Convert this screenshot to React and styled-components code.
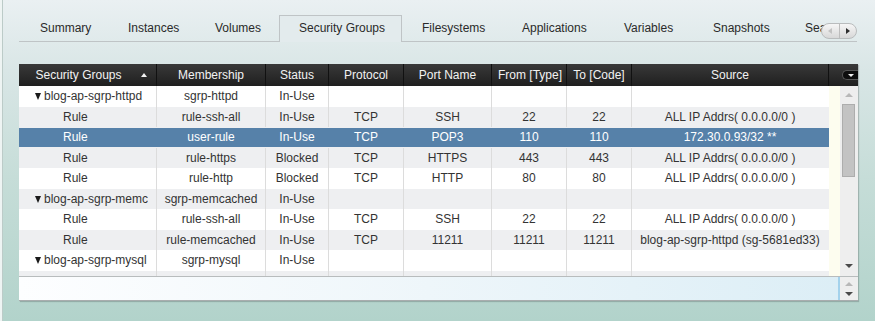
import React from 'react';
import styled, { createGlobalStyle, css } from 'styled-components';

const Global = createGlobalStyle`
  html, body { margin: 0; padding: 0; }
  body {
    width: 875px;
    height: 321px;
    overflow: hidden;
    font-family: "Liberation Sans", Arial, sans-serif;
  }
`;

const Page = styled.div`
  box-sizing: border-box;
  width: 875px;
  height: 321px;
  padding: 15px 17px 0 19px;
  display: flex;
  flex-direction: column;
  background: linear-gradient(to bottom, #eaf0f2 0%, #d9e6e6 22%, #c6ddd8 55%, #b2d3cb 100%);
  box-shadow: inset 2px 0 0 #eef4f3, inset 3px 0 0 #bccbc8;
`;

/* ---------- Tabs ---------- */
const TabStrip = styled.div`
  position: relative;
  height: 26px;
  margin-right: 1px;
  padding-left: 1px;
  display: flex;
  align-items: flex-start;
  border-bottom: 1px solid #bfc4c6;
`;

const TabList = styled.div`
  display: flex;
  height: 27px;
  flex: 1;
  overflow: hidden;
`;

const Tab = styled.div`
  flex: none;
  box-sizing: border-box;
  width: ${(p) => p.$w}px;
  height: 27px;
  padding: 0 0 0 19px;
  border: 1px solid transparent;
  border-bottom: none;
  font-size: 12px;
  line-height: 25px;
  color: #2a2a2a;
  white-space: nowrap;
  ${(p) =>
    p.$active &&
    css`
      border-color: #bfc4c6;
      background: #e3ebed;
    `}
`;

const Scroller = styled.div`
  position: absolute;
  right: 0;
  top: 8px;
  box-sizing: border-box;
  width: 36px;
  height: 16px;
  display: flex;
  border: 1px solid #b9bcbd;
  border-radius: 8px;
  background: linear-gradient(to bottom, #f6f6f6, #d8d8d8);
  overflow: hidden;
`;

const ScrollHalf = styled.div`
  flex: 1;
  display: flex;
  align-items: center;
  justify-content: center;
  & + & {
    border-left: 1px solid #bdbdbd;
  }
`;

const SideArrow = styled.span`
  width: 0;
  height: 0;
  border-top: 3.5px solid transparent;
  border-bottom: 3.5px solid transparent;
  ${(p) =>
    p.$dir === 'left'
      ? css`border-right: 4px solid ${p.$color};`
      : css`border-left: 4px solid ${p.$color};`}
`;

/* ---------- Grid ---------- */
const Grid = styled.div`
  margin-top: 22px;
  width: 839px;
  display: flex;
  flex-direction: column;
  box-shadow: 1px 1px 1px rgba(0, 0, 0, 0.18);
`;

const HeaderRow = styled.div`
  display: flex;
  height: 22px;
  background: linear-gradient(to bottom, #393939, #1f1f1f);
`;

const HeadCell = styled.div`
  position: relative;
  box-sizing: border-box;
  flex: none;
  width: ${(p) => p.$w}px;
  padding: ${(p) => (p.$sort ? '0 18px 0 0' : '0 6px')};
  border-right: 1px solid #111;
  color: #f2f2f2;
  font-size: 12px;
  line-height: 22px;
  text-align: center;
  white-space: nowrap;
  overflow: hidden;
`;

const SortMark = styled.span`
  position: absolute;
  right: 9px;
  top: 9px;
  width: 0;
  height: 0;
  border-left: 3px solid transparent;
  border-right: 3px solid transparent;
  border-bottom: 4px solid #f2f2f2;
`;

const MenuCell = styled.div`
  flex: 1;
  display: flex;
  align-items: center;
  justify-content: flex-end;
`;

const MenuPill = styled.div`
  box-sizing: border-box;
  width: 16px;
  height: 10px;
  border: 1px solid #555;
  border-right: none;
  border-radius: 5px 0 0 5px;
  background: #0d0d0d;
  display: flex;
  align-items: center;
  justify-content: center;
`;

const DownMark = styled.span`
  width: 0;
  height: 0;
  border-left: ${(p) => p.$half}px solid transparent;
  border-right: ${(p) => p.$half}px solid transparent;
  border-top: ${(p) => p.$h}px solid ${(p) => p.$color};
`;

const UpMark = styled.span`
  width: 0;
  height: 0;
  border-left: ${(p) => p.$half}px solid transparent;
  border-right: ${(p) => p.$half}px solid transparent;
  border-bottom: ${(p) => p.$h}px solid ${(p) => p.$color};
`;

const Body = styled.div`
  display: flex;
  height: 190px;
  background: #fff;
  border-bottom: 1px solid #b8bcbd;
`;

const Rows = styled.div`
  width: 810px;
  flex: none;
  overflow: hidden;
`;

const Row = styled.div`
  display: flex;
  height: 20.5px;
  background: ${(p) => (p.$sel ? '#5681a9' : p.$alt ? '#eeeff1' : '#ffffff')};
  color: ${(p) => (p.$sel ? '#ffffff' : '#333333')};
  ${(p) =>
    p.$sel &&
    css`
      box-shadow: inset 0 1px 0 #eeeff1, inset 0 -1px 0 #eeeff1;
    `}
`;

const Cell = styled.div`
  box-sizing: border-box;
  flex: none;
  width: ${(p) => p.$w}px;
  padding: 0 4px;
  border-right: 1px solid ${(p) => (p.$last ? 'transparent' : p.$sel ? 'transparent' : '#dcdcdc')};
  font-size: 12px;
  line-height: 20.5px;
  text-align: center;
  white-space: nowrap;
  overflow: hidden;
`;

const NameCell = styled(Cell)`
  display: flex;
  align-items: center;
  text-align: left;
  padding: 0 8px 0 ${(p) => (p.$group ? 16 : 44)}px;
`;

const NameText = styled.span`
  flex: 1;
  min-width: 0;
  overflow: hidden;
  white-space: nowrap;
  text-overflow: clip;
`;

const Twisty = styled.span`
  flex: none;
  width: 0;
  height: 0;
  margin: 1px 3px 0 0;
  border-left: 3.5px solid transparent;
  border-right: 3.5px solid transparent;
  border-top: 7px solid #1a1a1a;
`;

const Gutter = styled.div`
  width: 11px;
  flex: none;
  background: #fdfdef;
`;

const VScroll = styled.div`
  flex: 1;
  display: flex;
  flex-direction: column;
  align-items: center;
  background: #eeeeee;
  padding: 7px 0 8px;
`;

const Thumb = styled.div`
  box-sizing: border-box;
  align-self: flex-start;
  margin: 7px 0 0 2px;
  width: 13px;
  height: 73px;
  background: #c3c3c3;
  border: 1px solid #adadad;
`;

const Spacer = styled.div`
  flex: 1;
`;

const Footer = styled.div`
  display: flex;
  height: 23px;
  border-bottom: 1px solid #a9adae;
`;

const Entry = styled.div`
  width: 819px;
  flex: none;
  background: linear-gradient(to right, #fdfeff 0%, #eef6fa 50%, #dceef6 100%);
  border-right: 2px solid #a3d2ec;
`;

const Spin = styled.div`
  flex: 1;
  display: flex;
  flex-direction: column;
  align-items: center;
  justify-content: center;
  gap: 6px;
  background: #eeeeee;
`;

const cols = [138, 109, 63, 75, 88, 75, 65, 197];
const heads = ['Security Groups', 'Membership', 'Status', 'Protocol', 'Port Name', 'From [Type]', 'To [Code]', 'Source'];
const ALL = 'ALL IP Addrs( 0.0.0.0/0 )';

const data = [
  { g: true, c: ['blog-ap-sgrp-httpd', 'sgrp-httpd', 'In-Use', '', '', '', '', ''] },
  { c: ['Rule', 'rule-ssh-all', 'In-Use', 'TCP', 'SSH', '22', '22', ALL] },
  { sel: true, c: ['Rule', 'user-rule', 'In-Use', 'TCP', 'POP3', '110', '110', '172.30.0.93/32 **'] },
  { c: ['Rule', 'rule-https', 'Blocked', 'TCP', 'HTTPS', '443', '443', ALL] },
  { c: ['Rule', 'rule-http', 'Blocked', 'TCP', 'HTTP', '80', '80', ALL] },
  { g: true, c: ['blog-ap-sgrp-memcached', 'sgrp-memcached', 'In-Use', '', '', '', '', ''] },
  { c: ['Rule', 'rule-ssh-all', 'In-Use', 'TCP', 'SSH', '22', '22', ALL] },
  { c: ['Rule', 'rule-memcached', 'In-Use', 'TCP', '11211', '11211', '11211', 'blog-ap-sgrp-httpd (sg-5681ed33)'] },
  { g: true, c: ['blog-ap-sgrp-mysql', 'sgrp-mysql', 'In-Use', '', '', '', '', ''] },
  { c: ['', '', '', '', '', '', '', ''] },
];

const tabs = [
  ['Summary', 88],
  ['Instances', 87],
  ['Volumes', 84],
  ['Security Groups', 123],
  ['Filesystems', 100],
  ['Applications', 102],
  ['Variables', 89],
  ['Snapshots', 92],
  ['Search', 100],
];

export default function App() {
  return (
    <>
      <Global />
      <Page>
        <TabStrip>
          <TabList>
            {tabs.map(([t, w]) => (
              <Tab key={t} $w={w} $active={t === 'Security Groups'}>
                {t}
              </Tab>
            ))}
          </TabList>
          <Scroller>
            <ScrollHalf>
              <SideArrow $dir="left" $color="#c2c2c2" />
            </ScrollHalf>
            <ScrollHalf>
              <SideArrow $dir="right" $color="#2e2e2e" />
            </ScrollHalf>
          </Scroller>
        </TabStrip>

        <Grid>
          <HeaderRow>
            {heads.map((h, i) => (
              <HeadCell key={h} $w={cols[i]} $sort={i === 0}>
                {h}
                {i === 0 && <SortMark />}
              </HeadCell>
            ))}
            <MenuCell>
              <MenuPill>
                <DownMark $half={3} $h={3} $color="#f0f0f0" />
              </MenuPill>
            </MenuCell>
          </HeaderRow>

          <Body>
            <Rows>
              {data.map((r, ri) => (
                <Row key={ri} $alt={ri % 2 === 1} $sel={r.sel}>
                  {r.c.map((v, ci) =>
                    ci === 0 ? (
                      <NameCell key={ci} $w={cols[ci]} $group={r.g} $sel={r.sel}>
                        {r.g && <Twisty />}
                        <NameText>{v}</NameText>
                      </NameCell>
                    ) : (
                      <Cell key={ci} $w={cols[ci]} $sel={r.sel} $last={ci === cols.length - 1}>
                        {v}
                      </Cell>
                    )
                  )}
                </Row>
              ))}
            </Rows>
            <Gutter />
            <VScroll>
              <UpMark $half={4} $h={4} $color="#b8b8b8" />
              <Thumb />
              <Spacer />
              <DownMark $half={4} $h={4} $color="#4a4a4a" />
            </VScroll>
          </Body>

          <Footer>
            <Entry />
            <Spin>
              <UpMark $half={4} $h={4} $color="#b8b8b8" />
              <DownMark $half={4} $h={4} $color="#4a4a4a" />
            </Spin>
          </Footer>
        </Grid>
      </Page>
    </>
  );
}
